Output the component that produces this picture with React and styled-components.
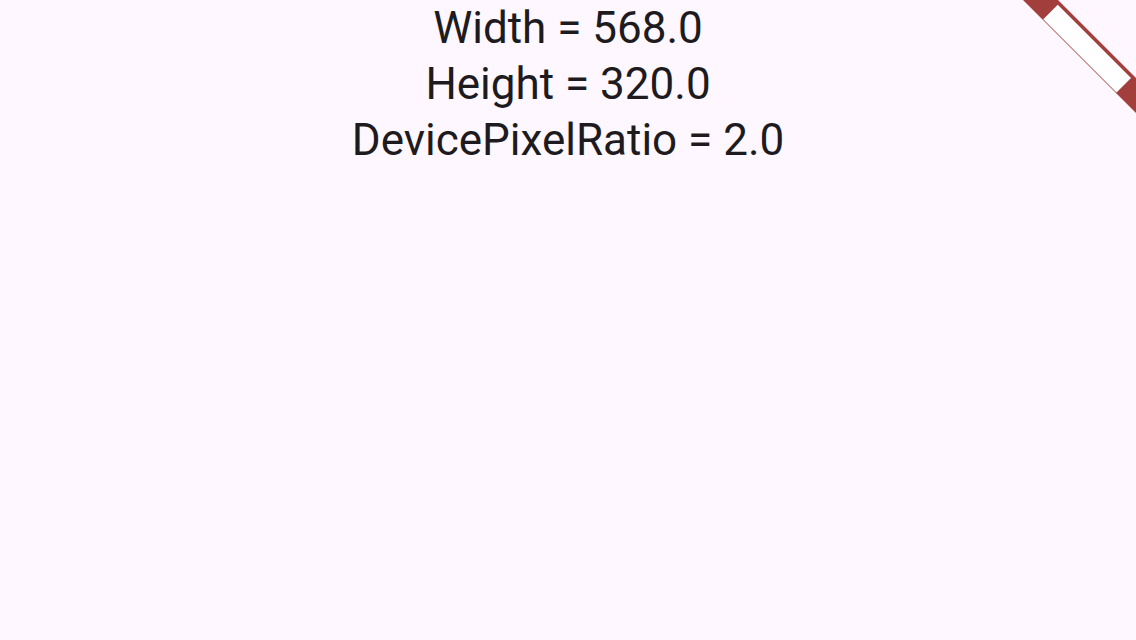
import styled, { createGlobalStyle } from 'styled-components'

const GlobalStyle = createGlobalStyle`
  html, body {
    margin: 0;
    padding: 0;
    background: #fef7ff;
  }
`

export default function App() {
  const lines = [
    'Width = 568.0',
    'Height = 320.0',
    'DevicePixelRatio = 2.0',
  ]

  return (
    <Screen>
      <GlobalStyle />
      <InfoColumn>
        {lines.map((line) => (
          <InfoLine key={line}>{line}</InfoLine>
        ))}
      </InfoColumn>
      <DebugBanner />
    </Screen>
  )
}

function DebugBanner() {
  return (
    <BannerStyled width="120" height="120" viewBox="0 0 120 120">
      <polygon points="7,0 42,0 120,78 120,113" fill="#a23f3c" />
      <polygon points="41.75,4.75 115,78 100.5,92.5 27.25,19.25" fill="#ffffff" />
    </BannerStyled>
  )
}

const Screen = styled.div`
  position: relative;
  width: 1136px;
  height: 640px;
  overflow: hidden;
  background: #fef7ff;
`

const InfoColumn = styled.div`
  display: flex;
  flex-direction: column;
  align-items: center;
`

const InfoLine = styled.div`
  font-family: Roboto, "Liberation Sans", sans-serif;
  font-size: 44px;
  line-height: 56px;
  color: #1d1b20;
`

const BannerStyled = styled.svg`
  position: absolute;
  top: 0;
  right: 0;
  display: block;
`
